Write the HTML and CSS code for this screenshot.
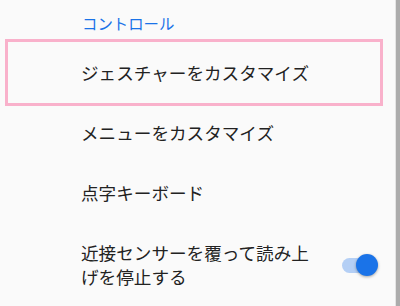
FILE: index.html
```html
<!DOCTYPE html>
<html lang="ja">
<head>
<meta charset="utf-8">
<link rel="stylesheet" href="styles.css">
</head>
<body>
<div class="screen">
  <main class="panel">
    <div class="section-title">コントロール</div>
    <div class="row focused">
      <span class="label">ジェスチャーをカスタマイズ</span>
    </div>
    <div class="row">
      <span class="label">メニューをカスタマイズ</span>
    </div>
    <div class="row">
      <span class="label">点字キーボード</span>
    </div>
    <div class="row">
      <span class="label">近接センサーを覆って読み上げを停止する</span>
      <span class="switch on"><span class="track"></span><span class="thumb"></span></span>
    </div>
  </main>
  <div class="edge"></div>
</div>
</body>
</html>
```
FILE: styles.css
```css
html, body {
  margin: 0;
  padding: 0;
  background: #fafafa;
}
body {
  font-family: "Noto Sans CJK JP", "Noto Sans", sans-serif;
  color: #222222;
  width: 400px;
  height: 306px;
  overflow: hidden;
}
.screen {
  display: flex;
  height: 306px;
}
.panel {
  flex: 1;
  background: #fafafa;
  border-right: 1px solid #e4e4e4;
}
.edge {
  width: 4px;
  background: #acacac;
}
.section-title {
  padding: 13px 0 10px 82px;
  font-size: 15.4px;
  line-height: 20px;
  color: #1a73e8;
}
.row {
  position: relative;
  display: flex;
  align-items: center;
  gap: 24px;
  padding: 18px 17px 18px 81px;
}
.label {
  flex: 1;
  font-size: 17.6px;
  line-height: 24px;
}
.focused::after {
  content: "";
  position: absolute;
  top: -4px;
  bottom: -3px;
  left: 5px;
  right: 12px;
  border: 3px solid #f9b1cb;
}
.switch {
  position: relative;
  flex: none;
  width: 36px;
  height: 23px;
}
.track {
  position: absolute;
  left: 0;
  top: 4px;
  width: 31px;
  height: 15px;
  border-radius: 8px;
  background: #b4cff5;
}
.thumb {
  position: absolute;
  right: 0;
  top: 0;
  width: 22px;
  height: 22px;
  border-radius: 50%;
  background: #1a73e8;
  box-shadow: 0 1px 3px rgba(0, 0, 0, 0.35);
}
```
